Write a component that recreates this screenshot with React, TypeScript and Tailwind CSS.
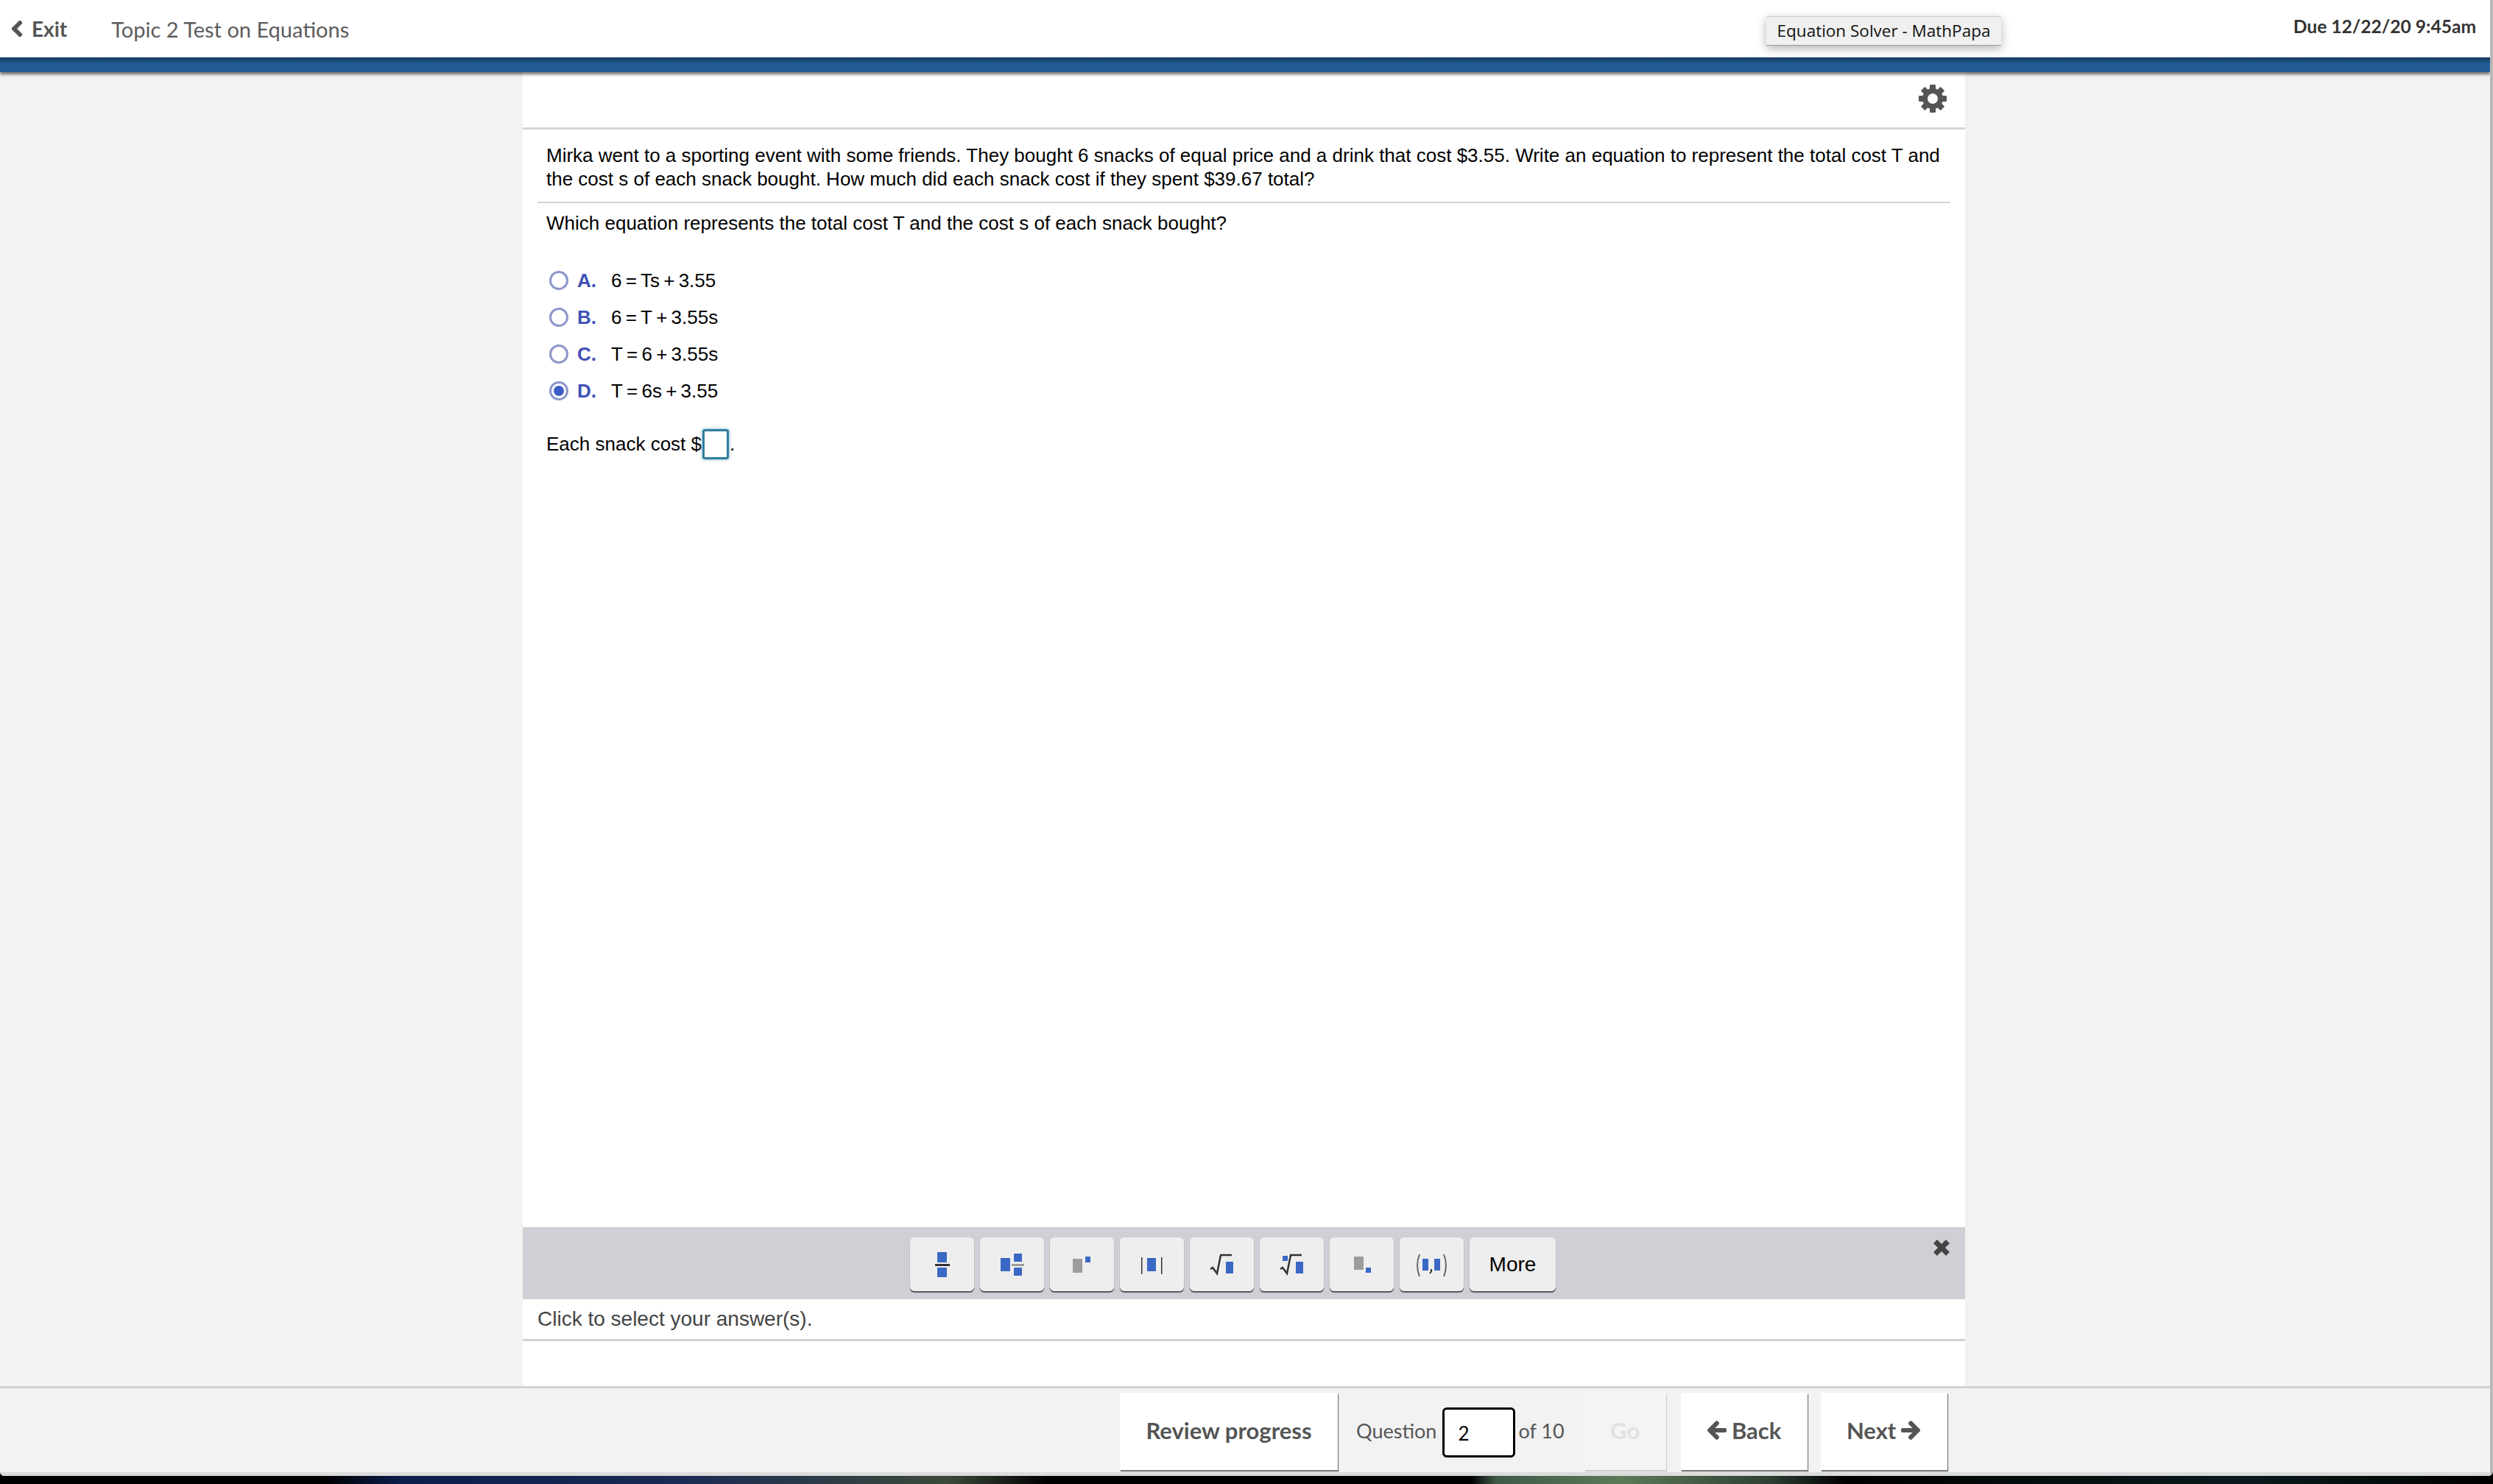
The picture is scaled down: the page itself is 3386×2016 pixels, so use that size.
import { FaChevronLeft, FaArrowLeft, FaArrowRight } from "react-icons/fa";

const BLUE = "#3b68c4";
const GRAY = "#9c9c9c";
const DARK = "#333333";

function Tool({ children }: { children: React.ReactNode }) {
  return (
    <button className="w-[87px] h-[73px] bg-[#eeeeee] rounded-[6px] shadow-[0_2px_1px_#555555]">
      <svg viewBox="0 0 87 73" width="87" height="73">{children}</svg>
    </button>
  );
}

function Radio({ checked, label, eq }: { checked?: boolean; label: string; eq: string }) {
  return (
    <div className="flex items-center h-[50px]">
      <span className="w-[26px] h-[26px] ml-[4px] rounded-full border-[3px] border-[#8c97cc] bg-white flex items-center justify-center">
        {checked && <span className="w-[14px] h-[14px] rounded-full bg-[#3d5fc4]" />}
      </span>
      <span className="w-[46px] ml-[12px] font-bold text-[#3f51b5]">{label}</span>
      <span className="whitespace-pre">{eq}</span>
    </div>
  );
}

function Gear() {
  return (
    <svg viewBox="0 0 40 40" width="40" height="40">
      {[0, 45, 90, 135].map((a) => (
        <rect key={a} x="16" y="1" width="8" height="38" rx="1" fill="#555555" transform={`rotate(${a} 20 20)`} />
      ))}
      <circle cx="20" cy="20" r="14" fill="#555555" />
      <circle cx="20" cy="20" r="7" fill="#ffffff" />
    </svg>
  );
}

export default function App() {
  return (
    <div className="h-[2016px] flex flex-col overflow-hidden bg-black font-['Liberation_Sans',Arial,sans-serif]">
      <div className="h-[2005px] flex flex-col border-r-[4px] border-[#b9b9b9] rounded-b-[6px] overflow-hidden bg-[#f2f2f2]">
        {/* top bar */}
        <header className="h-[78px] shrink-0 bg-white flex items-center font-['Lato',sans-serif] relative z-10">
          <FaChevronLeft className="ml-[14px] text-[#555555] w-[18px] h-[24px] stroke-[40] stroke-[#555555]" />
          <span className="ml-[11px] text-[28px] font-bold text-[#555555] leading-none">Exit</span>
          <span className="ml-[60px] text-[29px] text-[#5c5c5c] leading-none">Topic 2 Test on Equations</span>
          <div className="ml-auto h-[40px] w-[319px] mr-[664px] mt-[5px] bg-[#f0f0f0] border-t border-[#cfcfcf] border-b border-b-[#9a9a9a] shadow-[0_4px_12px_rgba(0,0,0,0.3)] flex items-center justify-center font-['Open_Sans',sans-serif] text-[22.5px] text-[#111111]">
            Equation Solver - MathPapa
          </div>
          <span className="absolute right-[19px] top-[24px] text-[24.6px] font-bold text-[#333333] leading-none">Due 12/22/20 9:45am</span>
        </header>
        <div className="h-[20px] shrink-0 bg-[linear-gradient(#14385a,#235d96_45%,#235d96)] shadow-[0_3px_4px_rgba(0,0,0,0.55)] relative z-10" />

        {/* question column */}
        <main className="flex-1 min-h-0 flex justify-start">
          <div className="ml-[710px] w-[1959px] bg-white flex flex-col">
            <div className="h-[78px] shrink-0 border-b-[3px] border-[#d4d4da] flex items-center justify-end pr-[24px] pb-[3px]">
              <Gear />
            </div>
            <div className="flex-1 min-h-0 text-[26px] leading-[32px] text-black">
              <p className="pl-[32px] pr-[30px] pt-[19px] pb-[15px]">
                Mirka went to a sporting event with some friends. They bought 6 snacks of equal price and a drink that cost $3.55. Write an equation to represent the total cost T and the cost s of each snack bought. How much did each snack cost if they spent $39.67 total?
              </p>
              <div className="ml-[20px] mr-[20px] h-[2px] bg-[#d2d2d2]" />
              <p className="pl-[32px] mt-[11px]">Which equation represents the total cost T and the cost s of each snack bought?</p>
              <div className="pl-[32px] mt-[37px]">
                <Radio label="A." eq={"6\u2009=\u2009Ts\u2009+\u20093.55"} />
                <Radio label="B." eq={"6\u2009=\u2009T\u2009+\u20093.55s"} />
                <Radio label="C." eq={"T\u2009=\u20096\u2009+\u20093.55s"} />
                <Radio checked label="D." eq={"T\u2009=\u20096s\u2009+\u20093.55"} />
              </div>
              <div className="pl-[32px] mt-[26px] flex items-center h-[42px]">
                <span>Each snack cost $</span>
                <span className="w-[36px] h-[41px] border-[3px] border-[#2f7f9f] rounded-[3px] shadow-[0_0_4px_#6fa9c0] ml-[1px] mr-[1px]" />
                <span>.</span>
              </div>
            </div>

            {/* math palette */}
            <div className="h-[98px] shrink-0 bg-[#cfd0d5] flex items-start pl-[526px] pt-[14px]">
              <div className="flex gap-[8px]">
                <Tool>
                  <rect x="37" y="20" width="13" height="14" fill={BLUE} />
                  <rect x="34" y="36" width="20" height="3" fill={DARK} />
                  <rect x="37" y="41" width="13" height="13" fill={BLUE} />
                </Tool>
                <Tool>
                  <rect x="28" y="28" width="13" height="18" fill={BLUE} />
                  <rect x="46" y="22" width="11" height="11" fill={BLUE} />
                  <rect x="43" y="36" width="17" height="3" fill={GRAY} />
                  <rect x="46" y="41" width="11" height="11" fill={BLUE} />
                </Tool>
                <Tool>
                  <rect x="31" y="29" width="13" height="19" fill={GRAY} />
                  <rect x="48" y="26" width="7" height="8" fill={BLUE} />
                </Tool>
                <Tool>
                  <rect x="29" y="27" width="1.5" height="23" fill={DARK} />
                  <rect x="56" y="27" width="1.5" height="23" fill={DARK} />
                  <rect x="37" y="28" width="12" height="18" fill={BLUE} />
                </Tool>
                <Tool>
                  <path d="M28 43l3-2 6 8 5-25h15" fill="none" stroke={DARK} strokeWidth="2.5" />
                  <rect x="49" y="33" width="10" height="16" fill={BLUE} />
                </Tool>
                <Tool>
                  <rect x="31" y="25" width="7" height="7" fill={BLUE} />
                  <path d="M28 43l3-2 6 8 5-25h15" fill="none" stroke={DARK} strokeWidth="2.5" />
                  <rect x="49" y="33" width="10" height="16" fill={BLUE} />
                </Tool>
                <Tool>
                  <rect x="33" y="26" width="13" height="18" fill={GRAY} />
                  <rect x="49" y="41" width="7" height="7" fill={BLUE} />
                </Tool>
                <Tool>
                  <path d="M27 23q-6 15 0 30M60 23q6 15 0 30" fill="none" stroke="#666666" strokeWidth="2" />
                  <rect x="31" y="29" width="8" height="16" fill={BLUE} />
                  <rect x="47" y="29" width="8" height="16" fill={BLUE} />
                  <path d="M43 43v3l-2 3" fill="none" stroke={DARK} strokeWidth="2" />
                </Tool>
                <button className="w-[117px] h-[73px] bg-[#eeeeee] rounded-[6px] shadow-[0_2px_1px_#555555] text-[28px] text-black">More</button>
              </div>
              <svg viewBox="0 0 24 24" width="24" height="24" className="ml-auto mr-[20px] mt-[2px]">
                <path d="M3.5 3.5l17 17M20.5 3.5l-17 17" stroke="#444444" strokeWidth="7" fill="none" />
              </svg>
            </div>

            <div className="h-[57px] shrink-0 border-b-[3px] border-[#d2d2d2] pl-[20px] flex items-center text-[28px] text-[#444444]">
              Click to select your answer(s).
            </div>
            <div className="h-[61px] shrink-0" />
          </div>
        </main>

        {/* footer */}
        <footer className="h-[122px] shrink-0 border-t-[3px] border-[#d2d2d2] border-b-[5px] border-b-[#dcdcdc] bg-[#f2f2f2] flex items-start pt-[6px] pl-[1521px] font-['Lato',sans-serif] text-[31px] text-[#555555]">
          <button className="w-[296px] h-[105px] bg-white shadow-[1px_2px_1px_#777777] font-bold text-[#555555] pb-[3px]">Review progress</button>
          <div className="h-[105px] flex items-center ml-[25px]">
            <span className="text-[27px]">Question</span>
            <span className="w-[99px] h-[68px] ml-[8px] mr-[4px] mt-[2px] bg-white border-[3px] border-black rounded-[6px] flex items-center pl-[18px] pt-[4px] text-[26px] text-black">2</span>
            <span className="text-[27px]">of 10</span>
          </div>
          <button className="w-[111px] h-[105px] ml-[27px] bg-[#f4f4f4] shadow-[1px_2px_1px_#cccccc] font-bold text-[#e2e2e2] pb-[3px]">Go</button>
          <button className="w-[172px] h-[105px] ml-[20px] bg-white shadow-[1px_2px_1px_#777777] font-bold flex items-center justify-center gap-[6px] pb-[3px]">
            <FaArrowLeft className="w-[28px] h-[28px] stroke-[30]" />
            Back
          </button>
          <button className="w-[172px] h-[105px] ml-[18px] bg-white shadow-[1px_2px_1px_#777777] font-bold flex items-center justify-center gap-[6px] pb-[3px]">
            Next
            <FaArrowRight className="w-[28px] h-[28px] stroke-[30]" />
          </button>
        </footer>
      </div>
      <div className="flex-1 bg-[linear-gradient(90deg,#000000_13%,#0c1d4a_16%,#1a2a55_27%,#3c4a3a_38%,#000000_42%,#000000_59%,#3f5a48_60%,#5c7a58_65%,#2e4034_71%,#000000_74%,#0a1a1c_90%,#000000)]" />
    </div>
  );
}
